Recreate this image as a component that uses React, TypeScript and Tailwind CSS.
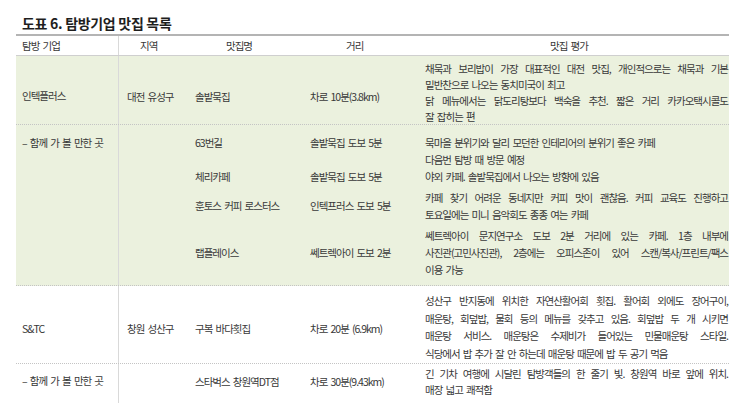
import React from 'react';

type Line = { text: string; justify?: boolean };

interface Spot {
  region?: string;
  name: string;
  dist: string;
  lines: Line[];
  rowClass: string;
  labelClass: string;
}

const body = "text-[10.5px] tracking-[-1px] [word-spacing:1.8px] text-[#383838]";

const EvalLines = ({ lines }: { lines: Line[] }) => (
  <>
    {lines.map((l, i) => (
      <div key={i} className={l.justify ? 'text-justify [text-align-last:justify]' : 'whitespace-nowrap'}>
        {l.text}
      </div>
    ))}
  </>
);

const SpotRow = ({ spot, evalClass }: { spot: Spot; evalClass: string }) => (
  <div className={`grid grid-cols-[71px_115px_110px_1fr] ${spot.rowClass}`}>
    <div className={`pl-[8px] flex whitespace-nowrap ${spot.labelClass}`}>{spot.region}</div>
    <div className={`pl-[5px] flex whitespace-nowrap ${spot.labelClass}`}>{spot.name}</div>
    <div className={`pl-[5px] flex whitespace-nowrap ${spot.labelClass}`}>{spot.dist}</div>
    <div className={`pl-[10px] pr-[1px] ${evalClass}`}>
      <EvalLines lines={spot.lines} />
    </div>
  </div>
);

const daejeonNearby: Spot[] = [
  {
    name: '63번길',
    dist: '솔밭묵집 도보 5분',
    lines: [
      { text: '묵마을 분위기와 달리 모던한 인테리어의 분위기 좋은 카페' },
      { text: '다음번 탐방 때 방문 예정' },
    ],
    rowClass: 'pt-[9px]',
    labelClass: 'items-start leading-[17px]',
  },
  {
    name: '체리카페',
    dist: '솔밭묵집 도보 5분',
    lines: [{ text: '야외 카페. 솔밭묵집에서 나오는 방향에 있음' }],
    rowClass: '',
    labelClass: 'items-center',
  },
  {
    name: '훈토스 커피 로스터스',
    dist: '인텍프러스 도보 5분',
    lines: [
      { text: '카페 찾기 어려운 동네지만 커피 맛이 괜찮음. 커피 교육도 진행하고', justify: true },
      { text: '토요일에는 미니 음악회도 종종 여는 카페' },
    ],
    rowClass: 'mt-[4px]',
    labelClass: 'items-center',
  },
  {
    name: '랩플레이스',
    dist: '쎄트렉아이 도보 2분',
    lines: [
      { text: '쎄트렉아이 문지연구소 도보 2분 거리에 있는 카페. 1층 내부에', justify: true },
      { text: '사진관(고민사진관), 2층에는 오피스존이 있어 스캔/복사/프린트/팩스', justify: true },
      { text: '이용 가능' },
    ],
    rowClass: 'mt-[4px]',
    labelClass: 'items-center',
  },
];

export default function App() {
  return (
    <div className={`w-[745px] h-[403px] overflow-hidden bg-white flex flex-col font-['Noto_Sans_CJK_KR','Noto_Sans',sans-serif] ${body}`}>
      {/* Title */}
      <div className="h-[34px] pt-[14px] pl-[22px] text-[14px] leading-[18px] font-bold tracking-[-0.3px] [word-spacing:0px] text-[#1e1e1e]">
        도표 6. 탐방기업 맛집 목록
      </div>

      <div className="ml-[16px] w-[713px] flex-1 flex flex-col border-t-2 border-[#b4b4b4]">
        {/* Header */}
        <div className="flex h-[20px] shrink-0 border-b border-[#cfcfcf] leading-[19px]">
          <div className="w-[103px] shrink-0 border-r border-[#d9d9d9] pl-[6px]">탐방 기업</div>
          <div className="w-[71px] pl-[21px]">지역</div>
          <div className="w-[115px] pl-[36px]">맛집명</div>
          <div className="w-[110px] pl-[41px]">거리</div>
          <div className="flex-1 pl-[135px]">맛집 평가</div>
        </div>

        {/* 인텍플러스 */}
        <div className="flex h-[69px] shrink-0 bg-[#ebf1de] border-b border-dotted border-[#c4c4c4]">
          <div className="w-[103px] shrink-0 border-r border-[#d9d9d9] pl-[6px] flex items-center pt-[12px]">
            인텍플러스
          </div>
          <div className="flex-1">
            <SpotRow
              evalClass="pt-[5px] leading-[16px]"
              spot={{
                region: '대전 유성구',
                name: '솔밭묵집',
                dist: '차로 10분(3.8km)',
                lines: [
                  { text: '채묵과 보리밥이 가장 대표적인 대전 맛집, 개인적으로는 채묵과 기본', justify: true },
                  { text: '밑반찬으로 나오는 동치미국이 최고' },
                  { text: '닭 메뉴에서는 닭도리탕보다 백숙을 추천. 짧은 거리 카카오택시콜도', justify: true },
                  { text: '잘 잡히는 편' },
                ],
                rowClass: 'h-[68px]',
                labelClass: 'items-center pt-[12px]',
              }}
            />
          </div>
        </div>

        {/* 대전 - 함께 가 볼 만한 곳 */}
        <div className="flex h-[161px] shrink-0 bg-[#ebf1de] border-b border-dotted border-[#c4c4c4]">
          <div className="w-[103px] shrink-0 border-r border-[#d9d9d9] pl-[6px] pt-[9px] leading-[17px] whitespace-nowrap">
            – 함께 가 볼 만한 곳
          </div>
          <div className="flex-1 flex flex-col">
            {daejeonNearby.map((s) => (
              <SpotRow key={s.name} spot={s} evalClass="leading-[17px]" />
            ))}
          </div>
        </div>

        {/* S&TC */}
        <div className="flex h-[78px] shrink-0 border-b border-dotted border-[#c4c4c4]">
          <div className="w-[103px] shrink-0 border-r border-[#d9d9d9] pl-[6px] flex items-center pt-[8px]">
            S&amp;TC
          </div>
          <div className="flex-1">
            <SpotRow
              evalClass="pt-[6px] leading-[17.5px]"
              spot={{
                region: '창원 성산구',
                name: '구복 바다횟집',
                dist: '차로 20분 (6.9km)',
                lines: [
                  { text: '성산구 반지동에 위치한 자연산활어회 횟집. 활어회 외에도 장어구이,', justify: true },
                  { text: '매운탕, 회덮밥, 물회 등의 메뉴를 갖추고 있음. 회덮밥 두 개 시키면', justify: true },
                  { text: '매운탕 서비스. 매운탕은 수제비가 들어있는 민물매운탕 스타일.', justify: true },
                  { text: '식당에서 밥 추가 잘 안 하는데 매운탕 때문에 밥 두 공기 먹음' },
                ],
                rowClass: 'h-[77px]',
                labelClass: 'items-center pt-[8px]',
              }}
            />
          </div>
        </div>

        {/* 창원 - 함께 가 볼 만한 곳 */}
        <div className="flex flex-1">
          <div className="w-[103px] shrink-0 border-r border-[#d9d9d9] pl-[6px] pt-[8px] leading-[17px] whitespace-nowrap">
            – 함께 가 볼 만한 곳
          </div>
          <div className="flex-1">
            <SpotRow
              evalClass="pt-[2px] leading-[16px]"
              spot={{
                name: '스타벅스 창원역DT점',
                dist: '차로 30분(9.43km)',
                lines: [
                  { text: '긴 기차 여행에 시달린 탐방객들의 한 줄기 빛. 창원역 바로 앞에 위치.', justify: true },
                  { text: '매장 넓고 쾌적함' },
                ],
                rowClass: 'h-[36px]',
                labelClass: 'items-center',
              }}
            />
          </div>
        </div>
      </div>
    </div>
  );
}
